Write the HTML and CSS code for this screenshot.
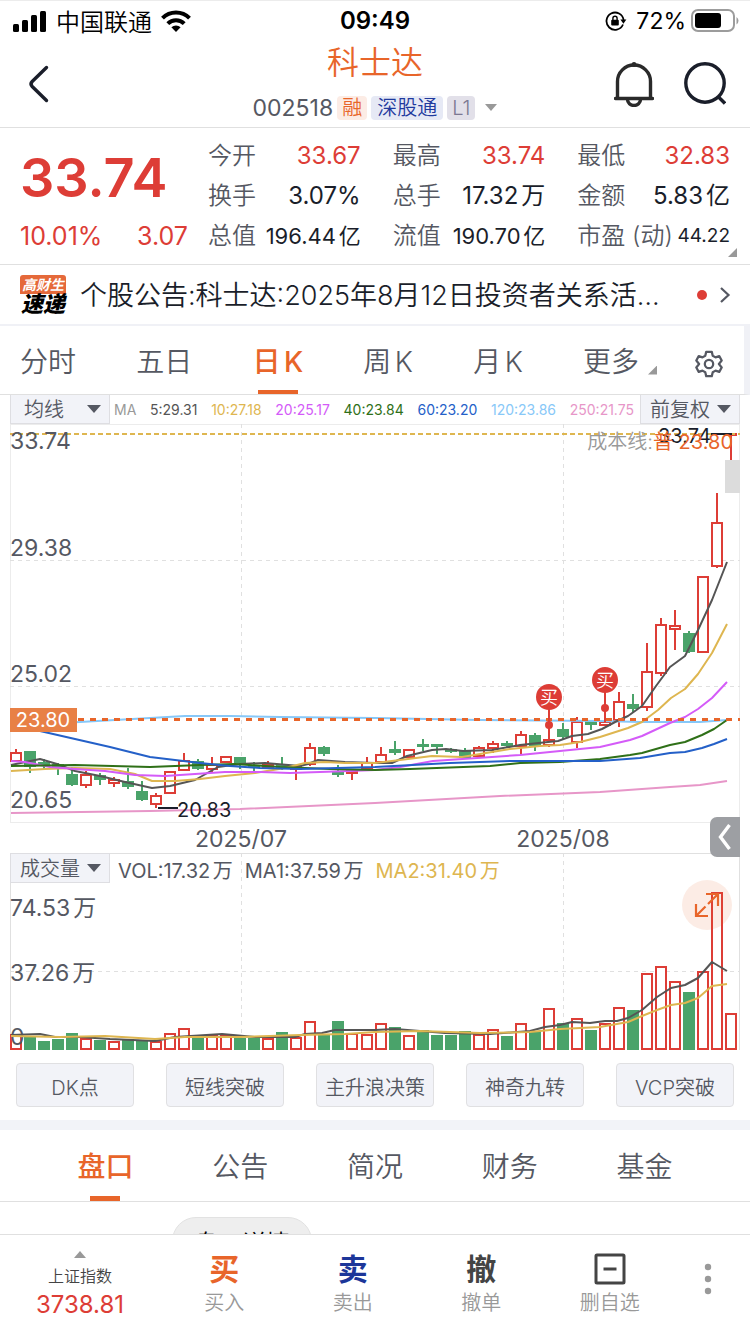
FILE: index.html
```html
<!DOCTYPE html>
<html lang="zh-CN">
<head>
    <meta charset="UTF-8">
    <meta name="viewport" content="width=device-width, initial-scale=1.0">
    <title>科士达 002518</title>
    <link rel="stylesheet" href="styles.css">
</head>
<body>
    <div class="app">
        <div class="status-bar">
            <div class="status-left">
                <svg width="34" height="22" viewBox="0 0 34 22">
                    <rect x="0" y="14" width="6" height="8" rx="1.5"/>
                    <rect x="9" y="10" width="6" height="12" rx="1.5"/>
                    <rect x="18" y="5" width="6" height="17" rx="1.5"/>
                    <rect x="27" y="1" width="6" height="21" rx="1.5"/>
                </svg>
                <span class="carrier">中国联通</span>
                <svg width="30" height="22" viewBox="0 0 30 22">
                    <g fill="none" stroke="#000" stroke-width="4">
                        <path d="M1.5 8.2a19 19 0 0 1 27 0"/>
                        <path d="M6.8 13.6a11.6 11.6 0 0 1 16.4 0"/>
                    </g>
                    <path d="M15 22l-4.6-4.7a6.5 6.5 0 0 1 9.2 0z"/>
                </svg>
            </div>
            <div class="status-time">09:49</div>
            <div class="status-right">
                <svg width="22" height="20" viewBox="0 0 22 20">
                    <path d="M18 13.5A8.6 8.6 0 1 1 18.6 9" fill="none" stroke="#000" stroke-width="1.8"/>
                    <path d="M15.4 8.6h6l-3 4.2z"/>
                    <rect x="6.2" y="8.8" width="7.6" height="5.6" rx="1"/>
                    <path d="M7.9 9V7.4a2.1 2.1 0 0 1 4.2 0V9" fill="none" stroke="#000" stroke-width="1.4"/>
                </svg>
                <span class="battery-level">72%</span>
                <svg width="48" height="24" viewBox="0 0 48 24">
                    <rect x="1" y="1" width="42" height="21" rx="6" fill="none" stroke="#9c9c9c" stroke-width="2"/>
                    <rect x="4" y="4" width="26" height="15" rx="3"/>
                    <path d="M45.5 8v7.500q2-1.500 2-3.750t-2-3.750z" fill="#9c9c9c"/>
                </svg>
            </div>
        </div>

        <header class="header">
            <button class="icon-btn" aria-label="返回">
                <svg width="30" height="38" viewBox="-4 0 30 38">
                    <path d="M18.500 2.500L4.200 16.500q-2.400 2.500 0 5L18.500 35.500" fill="none" stroke="#1a1e2a" stroke-width="3.400" stroke-linecap="round"/>
                </svg>
            </button>
            <div class="header-title">
                <h1>科士达</h1>
                <div class="stock-code">
                    <span class="code">002518</span>
                    <span class="tag tag-orange">融</span>
                    <span class="tag tag-blue">深股通</span>
                    <span class="tag tag-gray">L1</span>
                    <i class="caret"></i>
                </div>
            </div>
            <div class="header-actions">
                <button class="icon-btn" aria-label="提醒">
                    <svg width="40" height="46" viewBox="0 0 40 46" fill="none" stroke="#2a2a2a" stroke-width="3.400">
                        <path d="M1.500 37.500h37" stroke-linecap="round"/>
                        <path d="M3.500 37V20.500a16.500 16.500 0 0 1 33 0V37"/>
                        <path d="M13.500 38.500a6.500 6 0 0 0 13 0"/>
                        <circle cx="20" cy="3.500" r="2.500" fill="#2a2a2a" stroke="none"/>
                    </svg>
                </button>
                <button class="icon-btn" aria-label="搜索">
                    <svg width="42" height="44" viewBox="0 0 42 44" fill="none" stroke="#1a1e2a" stroke-width="3.400">
                        <circle cx="21" cy="21" r="19.200"/>
                        <path d="M34 34.500l7 7"/>
                    </svg>
                </button>
            </div>
        </header>

        <main class="content">
            <section class="quote">
                <div class="price-box">
                    <div class="price">33.74</div>
                    <div class="change"><span>10.01%</span><span>3.07</span></div>
                </div>
                <dl class="stats">
                    <div><dt>今开</dt><dd class="up">33.67</dd></div>
                    <div><dt>最高</dt><dd class="up">33.74</dd></div>
                    <div><dt>最低</dt><dd class="up">32.83</dd></div>
                    <div><dt>换手</dt><dd>3.07%</dd></div>
                    <div><dt>总手</dt><dd>17.32万</dd></div>
                    <div><dt>金额</dt><dd>5.83亿</dd></div>
                    <div><dt>总值</dt><dd class="medium">196.44亿</dd></div>
                    <div><dt>流值</dt><dd class="medium">190.70亿</dd></div>
                    <div><dt>市盈 (动)</dt><dd class="small">44.22</dd></div>
                </dl>
                <i class="corner quote-corner"></i>
            </section>

            <a class="news" href="#">
                <span class="news-logo"><b>高财生</b><strong>速递</strong></span>
                <span class="news-text">个股公告:科士达:2025年8月12日投资者关系活动记录表</span>
                <i class="dot"></i>
                <svg width="12" height="18" viewBox="0 0 12 18"><path d="M2 2l7.500 7L2 16" fill="none" stroke="#555862" stroke-width="2.200"/></svg>
            </a>

            <nav class="period-tabs">
                <div class="period-list">
                    <a href="#">分时</a>
                    <a href="#">五日</a>
                    <a href="#" class="active">日K</a>
                    <a href="#">周K</a>
                    <a href="#">月K</a>
                    <a href="#" class="more">更多<i class="corner"></i></a>
                </div>
                <button class="icon-btn" aria-label="设置">
                    <svg width="28" height="28" viewBox="0 0 30 30" fill="none" stroke="#555862" stroke-width="2.400" stroke-linejoin="round">
                        <path d="M12 2h6l1 4.200 3 1.700 4-1.300 2.600 4.700-3 3.700 3 3.700-2.600 4.700-4-1.300-3 1.700L18 28h-6l-1-4.200-3-1.700-4 1.300-2.600-4.700 3-3.700-3-3.700L4 6.600l4 1.300 3-1.700z"/>
                        <circle cx="15" cy="15" r="4.500"/>
                    </svg>
                </button>
            </nav>

            <section class="chart">
                <div class="ma-bar">
                    <label class="picker">
                        <select aria-label="主图指标"><option>均线</option><option>BOLL</option></select>
                    </label>
                    <div class="ma-values">
                        <span class="ma-name">MA</span>
                        <span class="ma5">5:29.31</span>
                        <span class="ma10">10:27.18</span>
                        <span class="ma20">20:25.17</span>
                        <span class="ma40">40:23.84</span>
                        <span class="ma60">60:23.20</span>
                        <span class="ma120">120:23.86</span>
                        <span class="ma250">250:21.75</span>
                    </div>
                    <label class="picker picker-right">
                        <select aria-label="复权"><option>前复权</option><option>不复权</option></select>
                    </label>
                </div>

                <svg class="price-chart" id="price-chart" viewBox="10 424 730 429">
                    <path class="frame" d="M10 424.500H740M10 822.500H740M10.500 424V822M739.500 424V822"/>
                    <path class="grid" d="M10 560.500H740M10 686.500H740M241.500 424V822M563.500 424V822"/>
                    <g id="candles"></g>
                    <g id="ma-lines"></g>
                    <path class="high-line" d="M10 434H740"/>
                    <path class="cost-line" d="M78 719.500H740"/>
                    <g class="axis">
                        <text x="10" y="449">33.74</text>
                        <text x="10" y="556">29.38</text>
                        <text x="10" y="682">25.02</text>
                        <text x="10" y="808">20.65</text>
                        <text x="241" y="847" text-anchor="middle">2025/07</text>
                        <text x="563" y="847" text-anchor="middle">2025/08</text>
                    </g>
                    <rect class="cost-badge" x="10" y="708" width="67" height="24"/>
                    <text class="cost-badge-text" x="43" y="727" text-anchor="middle">23.80</text>
                    <g class="peak">
                        <path d="M711 434H732M158 808H178"/>
                        <text x="658" y="443">33.74</text>
                        <text x="177" y="817">20.83</text>
                    </g>
                    <text class="cost-label" x="733" y="449" text-anchor="end">成本线:<tspan class="cost-value">普 23.80</tspan></text>
                    <rect class="handle" x="725" y="460" width="15" height="33"/>
                    <g id="marks"></g>
                </svg>

                <div class="volume">
                    <svg class="volume-chart" viewBox="10 853 730 197">
                        <path class="frame-dark" d="M10 853.500H740M10.500 853V1050M739.500 853V1050"/>
                        <path class="grid" d="M10 971.500H740M241.500 853V1050M563.500 853V1050"/>
                        <g id="bars"></g>
                        <g class="axis">
                            <text x="10" y="916">74.53万</text>
                            <text x="10" y="981">37.26万</text>
                            <text x="10" y="1045">0</text>
                        </g>
                        <g id="volume-lines"></g>
                    </svg>
                    <div class="volume-bar">
                        <label class="picker">
                            <select aria-label="副图指标"><option>成交量</option><option>MACD</option></select>
                        </label>
                        <span>VOL:17.32万</span>
                        <span>MA1:37.59万</span>
                        <span class="ma10">MA2:31.40万</span>
                    </div>
                    <button class="collapse" aria-label="展开侧栏">
                        <svg width="16" height="28" viewBox="0 0 16 28"><path d="M12.500 2L3.500 14l9 12" fill="none" stroke="#fff" stroke-width="3.400"/></svg>
                    </button>
                    <button class="expand" aria-label="全屏">
                        <svg width="26" height="26" viewBox="0 0 26 26" fill="none" stroke="#e8652a" stroke-width="2.200">
                            <path d="M12 2h12v12M14 12L23 3M2 12v12h12M3 23l8.500-8.500"/>
                        </svg>
                    </button>
                </div>
            </section>

            <div class="strategies">
                <button>DK点</button>
                <button>短线突破</button>
                <button>主升浪决策</button>
                <button>神奇九转</button>
                <button>VCP突破</button>
            </div>

            <nav class="info-tabs">
                <a href="#" class="active">盘口</a>
                <a href="#">公告</a>
                <a href="#">简况</a>
                <a href="#">财务</a>
                <a href="#">基金</a>
            </nav>
            <div class="sub-tabs">
                <button>盘口详情</button>
            </div>
        </main>

        <footer class="bottom-bar">
            <a class="index" href="#">
                <i class="caret-up"></i>
                <span>上证指数</span>
                <b>3738.81</b>
            </a>
            <button class="buy"><b>买</b><span>买入</span></button>
            <button class="sell"><b>卖</b><span>卖出</span></button>
            <button><b>撤</b><span>撤单</span></button>
            <button>
                <svg width="32" height="32" viewBox="0 0 32 32" fill="none" stroke="#444" stroke-width="3">
                    <rect x="2" y="2" width="28" height="28" rx="1"/>
                    <path d="M9.500 16h13"/>
                </svg>
                <span>删自选</span>
            </button>
            <button class="more-btn" aria-label="更多">
                <svg width="8" height="32" viewBox="0 0 8 32" fill="#999">
                    <circle cx="4" cy="4" r="3.200"/><circle cx="4" cy="16" r="3.200"/><circle cx="4" cy="28" r="3.200"/>
                </svg>
            </button>
        </footer>
    </div>
    <script src="script.js"></script>
</body>
</html>
```
FILE: styles.css
```css
* {
    box-sizing: border-box;
}
body {
    margin: 0;
    font-family: Inter, "Noto Sans CJK SC", sans-serif;
    font-weight: 350;
    color: #555862;
    background-color: #fff;
    text-autospace: normal;
}
button, select {
    font: inherit;
    color: inherit;
    margin: 0;
    padding: 0;
    border: 0;
    background: none;
}
a {
    color: inherit;
    text-decoration: none;
}
svg {
    display: block;
}
.app {
    display: flex;
    flex-direction: column;
    height: 100vh;
    border-top: 1px solid #ececec;
}
.content {
    flex: 1;
    min-height: 0;
    overflow: hidden;
}

/* status bar */
.status-bar {
    display: grid;
    grid-template-columns: 1fr auto 1fr;
    align-items: center;
    height: 39px;
    padding: 0 11px;
    font-size: 24px;
    color: #000;
}
.status-left, .status-right {
    display: flex;
    align-items: center;
    gap: 9px;
}
.status-left {
    padding-left: 2px;
}
.status-right {
    justify-content: flex-end;
}
.battery-level {
    margin-right: -4px;
    font-size: 23px;
    font-weight: 400;
}
.status-time {
    font-weight: 600;
}

/* header */
.header {
    display: grid;
    grid-template-columns: 1fr auto 1fr;
    align-items: center;
    height: 88px;
    padding: 0 24px;
    border-bottom: 1px solid #e0e0e0;
}
.header-title {
    display: flex;
    flex-direction: column;
    align-items: center;
}
.header h1 {
    margin: 0;
    font-size: 32px;
    line-height: 44px;
    font-weight: 350;
    color: #e8652a;
}
.stock-code {
    display: flex;
    align-items: center;
    gap: 4px;
    padding-top: 4px;
    height: 42px;
}
.code {
    font-size: 23px;
    font-weight: 400;
}
.tag {
    padding: 0 5px;
    border-radius: 4px;
    font-size: 20px;
    line-height: 24px;
}
.tag-orange {
    background-color: #fcece5;
    color: #e8652a;
}
.tag-blue {
    padding: 0 6px;
    background-color: #e6e9f5;
    color: #1f3a9e;
}
.tag-gray {
    background-color: #e2e0e9;
    color: #7b7792;
}
.caret {
    margin-left: 6px;
    border: 6px solid transparent;
    border-top: 7px solid #999;
    border-bottom: 0;
}
.header-actions {
    display: flex;
    justify-content: flex-end;
    align-items: center;
    gap: 30px;
}
.icon-btn {
    justify-self: start;
}

/* quote */
.quote {
    position: relative;
    display: grid;
    grid-template-columns: 168px 1fr;
    gap: 20px;
    padding: 8px 20px 8px;
    border-bottom: 1px solid #e0e0e0;
}
.price-box, .up {
    color: #dd3d36;
}
.price {
    font-size: 54px;
    line-height: 80px;
    padding-top: 2px;
    font-weight: 600;
}
.change {
    display: flex;
    justify-content: space-between;
    font-size: 25px;
    line-height: 36px;
    font-weight: 400;
}
.stats {
    display: grid;
    grid-template-columns: repeat(3, 1fr);
    column-gap: 32px;
    margin: 0;
    font-size: 24px;
    line-height: 40px;
}
.stats div {
    display: flex;
    justify-content: space-between;
    white-space: nowrap;
}
.stats dd {
    margin: 0;
    font-weight: 400;
    color: #1a1e2a;
}
.stats .up {
    color: #dd3d36;
}
.stats .medium {
    font-size: 22px;
}
.stats .small {
    font-size: 19px;
}
.corner {
    width: 9px;
    height: 9px;
    background-color: #999;
    clip-path: polygon(100% 0, 100% 100%, 0 100%);
}
.quote-corner {
    position: absolute;
    right: 13px;
    bottom: 7px;
}

/* news */
.news {
    display: flex;
    align-items: center;
    height: 61px;
    padding: 0 19px 0 20px;
    border-bottom: 2px solid #f0f1f6;
    color: #1a1e2a;
    text-autospace: no-autospace;
}
.news-logo {
    display: flex;
    flex-direction: column;
    width: 46px;
    margin-right: 14px;
    text-align: center;
    font-style: italic;
    white-space: nowrap;
}
.news-logo b {
    background-color: #e5693a;
    border-radius: 3px 3px 0 0;
    color: #fff;
    font-size: 14px;
    line-height: 19px;
    font-weight: 700;
}
.news-logo strong {
    font-size: 22px;
    line-height: 21px;
    font-weight: 900;
    color: #000;
}
.news-text {
    flex: 1;
    min-width: 0;
    margin-right: 32px;
    padding-bottom: 2px;
    overflow: hidden;
    text-overflow: ellipsis;
    white-space: nowrap;
    font-size: 27px;
}
.dot {
    width: 10px;
    height: 10px;
    margin-right: 12px;
    border-radius: 50%;
    background-color: #dd3d36;
}

/* period tabs */
.period-tabs {
    display: flex;
    align-items: center;
    height: 69px;
    padding: 0 21px 0 20px;
    border-bottom: 1px solid #e0e0e0;
    border-right: 6px solid #f0f1f6;
    font-size: 28px;
}
.period-list {
    flex: 1;
    display: flex;
    justify-content: space-between;
    margin-right: 38px;
    line-height: 64px;
}
.period-list a {
    padding-top: 4px;
}
.period-tabs .icon-btn {
    padding-top: 8px;
}
.active {
    position: relative;
    color: #e8652a;
    font-weight: 500;
}
.active::after {
    content: "";
    position: absolute;
    left: 50%;
    bottom: 0;
    width: 40px;
    height: 4px;
    transform: translateX(-50%);
    background-color: #e8652a;
}
.more {
    display: flex;
    align-items: center;
    gap: 9px;
}
.more .corner {
    margin-top: 16px;
}

/* chart */
.chart {
    padding: 0 10px;
}
.ma-bar {
    display: flex;
    height: 29px;
}
.picker {
    position: relative;
    flex: none;
    width: 100px;
    height: 29px;
    border: 1px solid #dedee2;
    border-top: 0;
    background-color: #f2f3f8;
}
.picker select {
    appearance: none;
    width: 100%;
    height: 28px;
    padding-top: 3px;
    padding-left: 13px;
    font-size: 20px;
    line-height: 25px;
}
.picker-right select, .volume-bar select {
    padding-left: 9px;
}
.picker::after {
    content: "";
    position: absolute;
    right: 8px;
    top: 10px;
    border: 7px solid transparent;
    border-top: 8px solid #555862;
    border-bottom: 0;
    pointer-events: none;
}
.ma-values {
    flex: 1;
    display: flex;
    justify-content: space-between;
    align-items: center;
    padding: 0 6px 0 4px;
    font-size: 14px;
    font-weight: 400;
}
.ma-name { color: #999; }
.ma5 { color: #555; }
.ma10 { color: #deb650; }
.ma20 { color: #d45bf8; }
.ma40 { color: #2f7018; }
.ma60 { color: #2460c8; }
.ma120 { color: #88c8f8; }
.ma250 { color: #e796c8; }

.price-chart, .volume-chart {
    width: 100%;
    height: auto;
}
.price-chart path, .volume-chart path, .price-chart polyline, .volume-chart polyline {
    fill: none;
}
.frame { stroke: #ececec; }
.frame-dark { stroke: #e0e0e0; }
.grid {
    stroke: #e0e0e0;
    stroke-dasharray: 4 4;
}
.axis {
    font-size: 23px;
    font-weight: 400;
    fill: #555862;
}
.high-line {
    stroke: #deb650;
    stroke-width: 2;
    stroke-dasharray: 5 3;
}
.cost-line {
    stroke: #e8652a;
    stroke-width: 3;
    stroke-dasharray: 6 6;
}
.cost-badge {
    fill: #e88045;
}
.cost-badge-text {
    fill: #fff;
    font-size: 20px;
    font-weight: 400;
}
.peak {
    fill: #1a1e2a;
    stroke: none;
    font-size: 20px;
    font-weight: 400;
}
.peak path {
    stroke: #1a1e2a;
    stroke-width: 2;
}
.cost-label {
    font-size: 20px;
    fill: #999;
    text-autospace: no-autospace;
}
.cost-value {
    fill: #e8652a;
    font-weight: 400;
}
.handle {
    fill: #dcdcdc;
}
.rise {
    fill: #fff;
    stroke: #dd3d36;
    stroke-width: 2;
}
.fall {
    fill: #4aa36a;
    stroke: #4aa36a;
    stroke-width: 2;
}
.line {
    stroke: currentColor;
    stroke-width: 2;
    stroke-linejoin: round;
}
.mark {
    fill: #dd3d36;
    stroke: #dd3d36;
    stroke-width: 2;
}
.mark text {
    fill: #fff;
    stroke: none;
    font-size: 18px;
}

/* volume */
.volume {
    position: relative;
}
.volume-bar {
    position: absolute;
    top: 0;
    left: 0;
    right: 0;
    display: flex;
    align-items: flex-start;
    font-size: 20px;
    line-height: 30px;
}
.volume-bar span {
    margin-right: 12px;
    padding-top: 3px;
    font-weight: 400;
}
.volume-bar .picker {
    margin-right: 8px;
    border-top: 1px solid #dedee2;
    height: 30px;
}
.collapse {
    position: absolute;
    top: -36px;
    right: 0;
    display: grid;
    place-items: center;
    width: 30px;
    height: 40px;
    border-radius: 7px 0 0 7px;
    background-color: #9d9fa3;
}
.expand {
    position: absolute;
    top: 27px;
    right: 8px;
    display: grid;
    place-items: center;
    width: 50px;
    height: 50px;
    border-radius: 50%;
    background-color: rgba(232, 101, 42, 0.12);
}

/* strategies */
.strategies {
    display: grid;
    grid-template-columns: repeat(5, 1fr);
    gap: 32px;
    padding: 13px 16px;
    border-bottom: 10px solid #f2f3f8;
    text-autospace: no-autospace;
}
.strategies button {
    height: 44px;
    padding-top: 2px;
    border: 1px solid #e0e0e2;
    border-radius: 4px;
    background-color: #f2f3f8;
    font-size: 20px;
    white-space: nowrap;
}

/* info tabs */
.info-tabs {
    display: grid;
    grid-template-columns: repeat(5, 1fr);
    height: 72px;
    padding: 0 38px;
    border-bottom: 1px solid #e0e0e0;
    font-size: 28px;
    line-height: 67px;
    text-align: center;
}
.info-tabs a {
    padding-top: 4px;
}
.info-tabs .active::after {
    width: 30px;
    height: 5px;
}
.sub-tabs {
    padding: 15px 172px;
}
.sub-tabs button {
    width: 140px;
    height: 48px;
    border: 1px solid #e2e2e2;
    border-radius: 24px;
    background-color: #eee;
    color: #000;
    font-size: 24px;
    white-space: nowrap;
}

/* bottom bar */
.bottom-bar {
    display: grid;
    grid-template-columns: 160px repeat(4, 1fr) 76px;
    height: 100px;
    border-top: 1px solid #e0e0e0;
    background-color: #fff;
    font-size: 20px;
}
.bottom-bar button, .bottom-bar .index {
    display: flex;
    flex-direction: column;
    align-items: center;
    color: #444;
}
.bottom-bar button {
    padding-top: 17px;
}
.bottom-bar button b {
    font-size: 30px;
    line-height: 34px;
    font-weight: 700;
}
.bottom-bar button svg {
    margin: 1px 0;
}
.bottom-bar button span {
    line-height: 34px;
    color: #999;
}
.bottom-bar .buy b {
    color: #e8652a;
}
.bottom-bar .sell b {
    color: #1c3699;
}
.index {
    padding-top: 16px;
}
.index span {
    font-size: 16px;
    line-height: 32px;
    padding-top: 2px;
}
.index b {
    font-size: 24px;
    line-height: 26px;
    font-weight: 400;
    color: #dd3d36;
}
.caret-up {
    border: 6px solid transparent;
    border-bottom: 7px solid #999;
    border-top: 0;
}
.bottom-bar .more-btn {
    padding: 27px 8px 0 0;
}
```
FILE: script.js
```js
var NS = "http://www.w3.org/2000/svg";
var FIRST_X = 16;
var STEP = 14.02;

// [direction, high, body top, body bottom, low]
var candles = [
    ["r", 749, 753, 761, 761], ["g", 751, 752, 766, 773], ["g", 759, 763, 765, 769], ["g", 763, 765, 766, 775],
    ["g", 767, 775, 784, 786], ["r", 771, 775, 785, 788], ["g", 773, 776, 779, 785], ["r", 777, 780, 783, 787],
    ["g", 768, 782, 786, 789], ["g", 781, 792, 799, 801], ["r", 793, 796, 804, 808], ["r", 772, 772, 793, 794],
    ["r", 753, 761, 770, 771], ["g", 759, 762, 768, 770], ["r", 757, 765, 769, 772], ["r", 756, 757, 762, 763],
    ["g", 757, 758, 762, 769], ["g", 762, 766, 767, 773], ["r", 761, 765, 767, 769], ["g", 757, 766, 768, 770],
    ["r", 765, 767, 769, 780], ["r", 743, 748, 764, 766], ["g", 746, 748, 753, 756], ["g", 765, 772, 774, 777],
    ["r", 769, 771, 773, 780], ["r", 757, 763, 768, 769], ["r", 747, 755, 762, 763], ["g", 741, 750, 752, 755],
    ["r", 750, 750, 757, 757], ["g", 739, 745, 746, 751], ["g", 745, 745, 746, 754], ["g", 748, 750, 751, 753],
    ["g", 748, 751, 757, 758], ["r", 746, 748, 756, 757], ["r", 741, 744, 748, 753], ["g", 741, 744, 745, 747],
    ["r", 731, 735, 746, 754], ["g", 733, 736, 745, 751], ["r", 735, 740, 745, 747], ["g", 723, 730, 736, 739],
    ["r", 717, 722, 742, 748], ["g", 721, 722, 724, 730], ["r", 721, 722, 725, 726], ["r", 692, 702, 720, 727],
    ["g", 694, 705, 708, 713], ["r", 643, 672, 707, 711], ["r", 618, 625, 673, 676], ["r", 610, 626, 629, 650],
    ["g", 631, 634, 651, 653], ["r", 576, 577, 652, 653], ["r", 493, 523, 566, 568], ["r", 434, 434, 435, 460]
];

// top edge of each volume bar
var volumes = [
    1035, 1037, 1042, 1040, 1034, 1039, 1041, 1042, 1040, 1041, 1042, 1034, 1029,
    1037, 1035, 1035, 1039, 1039, 1039, 1033, 1038, 1022, 1035, 1022, 1034, 1035,
    1024, 1028, 1036, 1031, 1036, 1036, 1032, 1035, 1030, 1037, 1024, 1032, 1009,
    1024, 1019, 1031, 1024, 1008, 1011, 974, 967, 982, 993, 972, 893, 1014
];

var maLines = {
    ma250: "11,813 150,811 240,809 375,803 500,796 600,792 670,787 700,785 727,781",
    ma120: "11,725 80,722 150,718 185,716 230,716 280,717 375,718 480,720 600,721 640,722 700,722 727,720",
    ma5: "11,765 40,759 57,764 75,771 100,776 125,782 152,788 170,786 195,780 218,767 240,764 265,763 300,766 308,764 318,760 345,762 375,763 392,763 407,756 432,750 446,749 463,751 492,750 520,745 548,742 558,741 572,736 588,734 602,729 617,721 628,716 642,706 656,686 670,667 685,656 698,630 712,600 727,562",
    ma10: "11,771 45,769 75,768 110,769 135,774 152,781 175,781 200,779 225,776 255,773 285,768 305,763 325,762 345,763 375,763 400,760 432,756 462,757 480,754 510,749 540,746 560,745 580,742 600,737 628,728 642,722 658,710 671,698 685,689 698,674 712,653 727,624",
    ma20: "11,761 25,762 50,767 75,769 105,771 135,775 165,776 195,774 225,772 260,772 290,773 320,772 350,771 375,770 400,767 433,761 492,757 520,755 560,751 600,747 630,740 642,736 670,723 685,717 698,709 712,698 727,682",
    ma40: "11,766 75,765 150,767 200,765 235,764 280,767 330,769 375,770 410,769 490,766 520,763 560,762 600,759 630,755 642,753 670,745 685,742 702,735 714,729 727,720",
    ma60: "11,723 40,731 75,739 110,747 150,757 200,763 230,766 260,768 300,769 375,767 450,763 510,761 600,761 640,758 670,753 685,752 702,748 714,744 727,739"
};

var volumeLines = {
    ma5: "11,1035 40,1034 55,1037 80,1037 110,1039 155,1041 175,1037 222,1034 255,1037 295,1037 305,1034 322,1033 335,1030 375,1030 395,1029 420,1031 445,1033 490,1034 530,1031 545,1027 560,1025 572,1022 590,1023 605,1021 617,1021 628,1018 642,1010 657,997 671,988 685,985 698,978 712,962 727,971",
    ma10: "11,1036 60,1037 105,1036 155,1039 185,1037 240,1037 300,1035 345,1034 375,1032 420,1031 480,1033 530,1032 560,1029 600,1027 628,1022 642,1016 657,1010 671,1005 685,1003 698,998 712,986 727,984"
};

// buy points: [candle index, badge centre, dot, stem end]
var buys = [[38, 697, 725, 740], [42, 680, 708, 722]];

function add(parent, tag, attrs) {
    var el = document.createElementNS(NS, tag);
    for (var key in attrs) {
        el.setAttribute(key, attrs[key]);
    }
    parent.appendChild(el);
    return el;
}

function drawLines(id, lines) {
    var group = document.getElementById(id);
    for (var name in lines) {
        add(group, "polyline", { "class": "line " + name, points: lines[name] });
    }
}

var candleGroup = document.getElementById("candles");
var barGroup = document.getElementById("bars");

candles.forEach(function (c, i) {
    var x = Math.round(FIRST_X + i * STEP);
    var cls = c[0] === "r" ? "rise" : "fall";
    add(candleGroup, "path", { "class": cls, d: "M" + x + " " + c[1] + "V" + c[4] });
    add(candleGroup, "rect", { "class": cls, x: x - 5, y: c[2], width: 10, height: c[3] - c[2] });
    add(barGroup, "rect", { "class": cls, x: x - 5, y: volumes[i], width: 10, height: 1049 - volumes[i] });
});

drawLines("ma-lines", maLines);
drawLines("volume-lines", volumeLines);

var markGroup = document.getElementById("marks");
buys.forEach(function (b) {
    var x = Math.round(FIRST_X + b[0] * STEP);
    var g = add(markGroup, "g", { "class": "mark" });
    add(g, "path", { d: "M" + x + " " + b[1] + "V" + b[3] });
    add(g, "circle", { cx: x, cy: b[1], r: 12 });
    add(g, "circle", { cx: x, cy: b[2], r: 3 });
    add(g, "text", { x: x, y: b[1] + 7, "text-anchor": "middle" }).textContent = "买";
});
```
